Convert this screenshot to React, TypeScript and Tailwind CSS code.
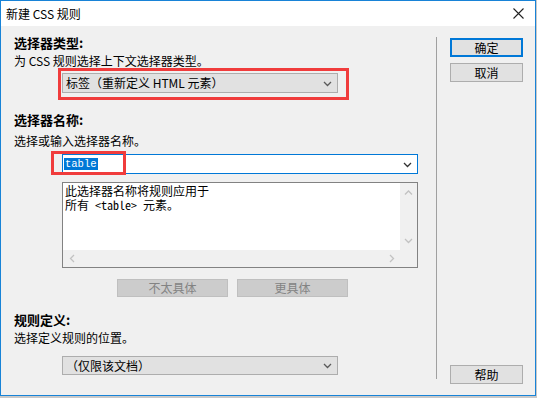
import React from 'react';

const Chevron = ({ dir = 'down', color = '#5a5a5a', size = 9 }: { dir?: 'down' | 'up' | 'left' | 'right'; color?: string; size?: number }) => {
  const d = {
    down: 'M1 3 L4.5 6.5 L8 3',
    up: 'M1 6.5 L4.5 3 L8 6.5',
    left: 'M6 1 L2.5 4.5 L6 8',
    right: 'M3 1 L6.5 4.5 L3 8',
  }[dir];
  return (
    <svg width={size} height={size} viewBox="0 0 9 9">
      <path d={d} fill="none" stroke={color} strokeWidth={1.3} />
    </svg>
  );
};

const Select = ({ text, h = 'h-[20px]' }: { text: string; h?: string }) => (
  <div className={`ml-[48px] w-[276px] ${h} bg-[#e1e1e1] border border-[#adadad] flex items-center justify-between pl-[3px] pr-[5px]`}>
    <span>{text}</span>
    <Chevron />
  </div>
);

const DlgButton = ({ label, primary }: { label: string; primary?: boolean }) => (
  <div
    className={`w-[73px] h-[19px] flex items-center justify-center bg-[#e1e1e1] text-black ${
      primary ? 'border-2 border-[#0078d7]' : 'border border-[#adadad]'
    }`}
  >
    {label}
  </div>
);

export default function App() {
  return (
    <div className="w-[537px] h-[398px] bg-[#c9c9c9] overflow-hidden text-[12px] leading-[16px] text-black font-['Noto_Sans_CJK_SC',sans-serif]">
      <div className="relative w-[536px] h-[396px] border border-[#1883d7] bg-[#f0f0f0] flex flex-col">
        {/* title bar */}
        <div className="h-[25px] bg-white flex items-center justify-between pl-[5px] pr-[11px] shrink-0">
          <span className="text-[12px]">新建 CSS 规则</span>
          <svg width="11" height="11" viewBox="0 0 11 11">
            <path d="M0.5 0.5 L10.5 10.5 M10.5 0.5 L0.5 10.5" stroke="#222" strokeWidth="1.1" />
          </svg>
        </div>

        <div className="flex flex-1">
          {/* left panel */}
          <div className="w-[435px] pl-[13px] pt-[9px] flex flex-col">
            <div className="font-bold text-[13px]">选择器类型:</div>
            <div className="mt-[2px]">为 CSS 规则选择上下文选择器类型。</div>
            <div className="mt-[4px]">
              <Select text="标签（重新定义 HTML 元素）" />
            </div>

            <div className="mt-[19px] font-bold text-[13px]">选择器名称:</div>
            <div className="mt-[5px]">选择或输入选择器名称。</div>
            <div className="mt-[5px] ml-[48px] w-[356px] h-[20px] bg-white border border-[#0078d7] flex items-center justify-between pl-[1px] pr-[5px]">
              <span className="bg-[#0078d7] text-white font-['Liberation_Mono',monospace] text-[10.5px] leading-[12px] px-[1px]">table</span>
              <Chevron color="#333" />
            </div>

            <div className="mt-[8px] ml-[48px] w-[356px] h-[86px] border border-[#828282] bg-[#f0f0f0] grid grid-cols-[1fr_17px] grid-rows-[1fr_17px]">
              <div className="bg-white pl-[2px] text-[12px] leading-[15px] font-['Noto_Sans_Mono_CJK_SC','Noto_Sans_CJK_SC',monospace]">
                <div>此选择器名称将规则应用于</div>
                <div className="-mt-[1px]">所有 &lt;table&gt; 元素。</div>
              </div>
              <div className="flex flex-col items-center justify-between py-[5px]">
                <Chevron dir="up" color="#c2c2c2" />
                <Chevron dir="down" color="#c2c2c2" />
              </div>
              <div className="flex items-center justify-between pl-[5px] pr-[4px]">
                <Chevron dir="left" color="#c2c2c2" />
                <Chevron dir="right" color="#c2c2c2" />
              </div>
              <div />
            </div>

            <div className="mt-[11px] ml-[103px] flex gap-[9px]">
              <div className="w-[111px] h-[18px] bg-[#cccccc] border border-[#bfbfbf] text-[#838383] flex items-center justify-center">不太具体</div>
              <div className="w-[111px] h-[18px] bg-[#cccccc] border border-[#bfbfbf] text-[#838383] flex items-center justify-center">更具体</div>
            </div>

            <div className="mt-[15px] font-bold text-[13px]">规则定义:</div>
            <div className="mt-[2px]">选择定义规则的位置。</div>
            <div className="mt-[10px]">
              <Select text="（仅限该文档）" h="h-[19px]" />
            </div>
          </div>

          {/* divider */}
          <div className="w-px bg-[#a0a0a0] mt-[11px] mb-[16px]" />

          {/* right panel */}
          <div className="flex-1 pl-[13px] pt-[12px] pb-[11px] flex flex-col gap-[6px]">
            <DlgButton label="确定" primary />
            <DlgButton label="取消" />
            <div className="mt-auto">
              <DlgButton label="帮助" />
            </div>
          </div>
        </div>

        {/* annotation boxes */}
        <div className="absolute left-[57px] top-[67px] w-[291px] h-[32px] border-[3px] border-[#f03c3c]" />
        <div className="absolute left-[50px] top-[150px] w-[75px] h-[24px] border-[3px] border-[#f03c3c]" />
      </div>
    </div>
  );
}
